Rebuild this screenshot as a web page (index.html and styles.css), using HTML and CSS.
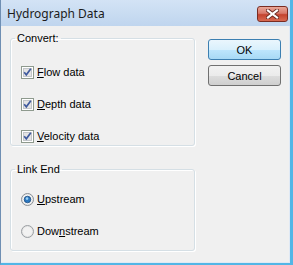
FILE: index.html
```html
<!DOCTYPE html>
<html lang="en">
<head>
    <meta charset="UTF-8">
    <link rel="stylesheet" href="styles.css">
    <title>Hydrograph Data</title>
</head>
<body>
    <div class="window">
        <div class="titlebar">
            <span class="title">Hydrograph Data</span>
            <button class="close" aria-label="Close">
                <svg width="13" height="10" viewBox="0 0 13 10">
                    <path d="M2 1.5 L11 8.5 M11 1.5 L2 8.5" stroke="#6b2a22" stroke-width="4" stroke-linecap="square" fill="none"/>
                    <path d="M2 1.5 L11 8.5 M11 1.5 L2 8.5" stroke="#ffffff" stroke-width="2.2" stroke-linecap="square" fill="none"/>
                </svg>
            </button>
        </div>

        <div class="client">
            <div class="groups">
                <fieldset class="group convert">
                    <legend>Convert:</legend>
                    <label class="option">
                        <svg class="check" width="13" height="13" viewBox="0 0 13 13">
                            <rect x="0.5" y="0.5" width="12" height="12" fill="#ffffff" stroke="#8e9a8e"/>
                            <rect x="2.5" y="2.5" width="8" height="8" fill="#e4e4e4" stroke="#c2c6c9"/>
                            <path d="M3.2 6.3 L5.3 8.8 L9.8 2.8" stroke="#3f5a9e" stroke-width="1.7" fill="none"/>
                        </svg>
                        <span><u>F</u>low data</span>
                    </label>
                    <label class="option">
                        <svg class="check" width="13" height="13" viewBox="0 0 13 13">
                            <rect x="0.5" y="0.5" width="12" height="12" fill="#ffffff" stroke="#8e9a8e"/>
                            <rect x="2.5" y="2.5" width="8" height="8" fill="#e4e4e4" stroke="#c2c6c9"/>
                            <path d="M3.2 6.3 L5.3 8.8 L9.8 2.8" stroke="#3f5a9e" stroke-width="1.7" fill="none"/>
                        </svg>
                        <span><u>D</u>epth data</span>
                    </label>
                    <label class="option">
                        <svg class="check" width="13" height="13" viewBox="0 0 13 13">
                            <rect x="0.5" y="0.5" width="12" height="12" fill="#ffffff" stroke="#8e9a8e"/>
                            <rect x="2.5" y="2.5" width="8" height="8" fill="#e4e4e4" stroke="#c2c6c9"/>
                            <path d="M3.2 6.3 L5.3 8.8 L9.8 2.8" stroke="#3f5a9e" stroke-width="1.7" fill="none"/>
                        </svg>
                        <span><u>V</u>elocity data</span>
                    </label>
                </fieldset>

                <fieldset class="group link-end">
                    <legend>Link End</legend>
                    <label class="option">
                        <svg class="radio" width="13" height="13" viewBox="0 0 13 13">
                            <circle cx="6.5" cy="6.5" r="6" fill="#e9e9e9" stroke="#8a8f94"/>
                            <circle cx="6.5" cy="6.5" r="4.5" fill="#f6f6f6"/>
                            <circle cx="6.5" cy="6.5" r="3.3" fill="#2c78c0" stroke="#1d4d80" stroke-width="0.8"/>
                            <circle cx="6" cy="5.6" r="1.3" fill="#9dd2f5"/>
                        </svg>
                        <span><u>U</u>pstream</span>
                    </label>
                    <label class="option">
                        <svg class="radio" width="13" height="13" viewBox="0 0 13 13">
                            <circle cx="6.5" cy="6.5" r="6" fill="#e6e6e6" stroke="#9a9ea2"/>
                            <circle cx="6.5" cy="6.5" r="4.5" fill="#f2f2f2"/>
                        </svg>
                        <span>Dow<u>n</u>stream</span>
                    </label>
                </fieldset>
            </div>

            <div class="actions">
                <button class="btn btn-default">OK</button>
                <button class="btn">Cancel</button>
            </div>
        </div>
    </div>
</body>
</html>
```

FILE: styles.css
```css
body {
    margin: 0;
    padding: 0;
    background: #ffffff;
    font-family: 'Liberation Sans', Arial, sans-serif;
    font-size: 11px;
    color: #000;
}

.window {
    width: 293px;
    height: 265px;
    box-sizing: border-box;
    display: flex;
    flex-direction: column;
    background: #c5d9ef;
    border-left: 1px solid #6f8fb3;
    border-right: 3px solid #52b6e6;
    border-bottom: 2px solid #52b6e6;
}

.titlebar {
    height: 26px;
    flex: none;
    display: flex;
    align-items: center;
    justify-content: space-between;
    padding: 0 2px 0 6px;
    background: linear-gradient(#d3e3f5, #bfd5ee);
}

.title {
    font-family: 'Noto Sans', 'Open Sans', sans-serif;
    font-size: 12px;
    color: #1b1b1b;
    margin-top: 1px;
}

.close {
    width: 31px;
    height: 16px;
    margin-top: 2px;
    padding: 0;
    display: flex;
    align-items: center;
    justify-content: center;
    border: 1px solid #7a2c22;
    border-radius: 3px;
    background: linear-gradient(#eaa898 0%, #d8786a 45%, #c4432e 55%, #d86a52 100%);
}

.client {
    flex: 1;
    display: flex;
    padding: 6px 0 0 9px;
    background: #f0f0f0;
    border-right: 1px solid #dfe9f5;
    border-bottom: 1px solid #dfe9f5;
}

.groups {
    display: flex;
    flex-direction: column;
}

.group {
    width: 185px;
    box-sizing: border-box;
    margin: 0;
    display: flex;
    flex-direction: column;
    gap: 16px;
    border: 1px solid #d5dfe5;
    border-radius: 3px;
    box-shadow: 1px 1px 0 #ffffff, inset 1px 1px 0 #ffffff;
}

.group legend {
    line-height: 13px;
    padding: 0 2px;
    margin-left: -6px;
    color: #000;
}

.convert {
    padding: 19px 10px 1px 10px;
}

.link-end {
    margin-top: 17px;
    padding: 15px 10px 11px 10px;
}

.option {
    height: 16px;
    display: flex;
    align-items: center;
    gap: 3px;
}

.option svg {
    flex: none;
}

.actions {
    display: flex;
    flex-direction: column;
    gap: 5px;
    margin: 7px 0 0 13px;
}

.btn {
    width: 73px;
    height: 21px;
    padding: 0;
    font-family: 'Liberation Sans', Arial, sans-serif;
    font-size: 11px;
    color: #000;
    border: 1px solid #707070;
    border-radius: 3px;
    background: linear-gradient(#f2f2f2 0%, #ebebeb 50%, #dddddd 51%, #cfcfcf 100%);
}

.btn-default {
    border-color: #3c7fb1;
    background: linear-gradient(#eaf6fd 0%, #d9f0fc 50%, #bee6fd 51%, #a7d9f5 100%);
}
```
